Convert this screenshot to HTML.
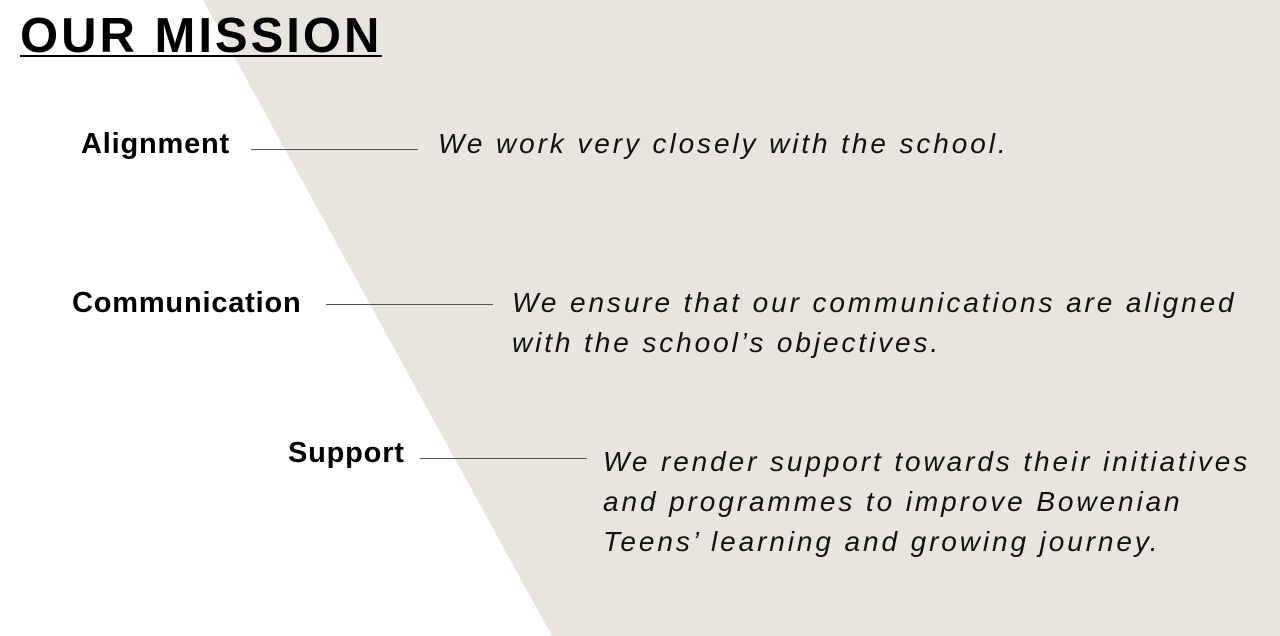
<!DOCTYPE html>
<html><head><meta charset="utf-8"><style>
html,body{margin:0;padding:0;width:1280px;height:636px;overflow:hidden;background:#fff;font-family:"Liberation Sans",sans-serif;color:#000;}
.bg{position:absolute;left:0;top:0}
h1{position:absolute;left:20px;top:6px;margin:0;font-size:49px;font-weight:bold;letter-spacing:3px;line-height:60px;border-bottom:2px solid #000;height:49px;overflow:visible}
.lab{position:absolute;font-weight:bold;font-size:29px;letter-spacing:0.8px;line-height:32px}
.ln{position:absolute;height:1px;background:#555}
.txt{position:absolute;font-style:italic;font-size:28px;letter-spacing:2.9px;line-height:40px;color:#111;white-space:nowrap}
</style></head><body>
<svg class="bg" width="1280" height="636"><polygon points="203,0 1280,0 1280,636 552,636" fill="#e8e5df"/></svg>
<h1>OUR MISSION</h1>
<div class="lab" style="left:81px;top:128px">Alignment</div>
<div class="ln" style="left:251px;top:149px;width:167px"></div>
<div class="txt" style="left:438px;top:124px">We work very closely with the school.</div>
<div class="lab" style="left:72px;top:287px">Communication</div>
<div class="ln" style="left:326px;top:304px;width:167px"></div>
<div class="txt" style="left:512px;top:283px">We ensure that our communications are aligned<br>with the school’s objectives.</div>
<div class="lab" style="left:288px;top:437px">Support</div>
<div class="ln" style="left:420px;top:458px;width:167px"></div>
<div class="txt" style="left:603px;top:442px">We render support towards their initiatives<br>and programmes to improve Bowenian<br>Teens’ learning and growing journey.</div>
</body></html>
